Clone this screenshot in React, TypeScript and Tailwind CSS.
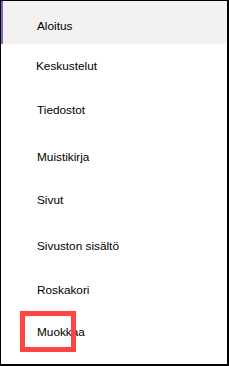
const items = [
  { label: "Aloitus", cls: "h-[43px] pt-[17px] bg-[#f3f2f1] border-l-2 border-[#8764b8] pl-[34px]" },
  { label: "Keskustelut", cls: "h-[44px] pt-[14px] pl-[35px]" },
  { label: "Tiedostot", cls: "h-[44px] pt-[14px] pl-[36px]" },
  { label: "Muistikirja", cls: "h-[44px] pt-[17px] pl-[36px]" },
  { label: "Sivut", cls: "h-[44px] pt-[16px] pl-[36px]" },
  { label: "Sivuston sisältö", cls: "h-[44px] pt-[18px] pl-[36px]" },
  { label: "Roskakori", cls: "h-[44px] pt-[18px] pl-[36px]" },
  { label: "Muokkaa", cls: "h-[44px] pt-[16px] pl-[36px]" },
];

export default function App() {
  return (
    <div
      className="relative w-[229px] h-[366px] bg-white border-t border-l border-r-2 border-b-2 border-black text-[11.8px] leading-[16px] text-black"
      style={{ fontFamily: '"Liberation Sans", Arial, sans-serif' }}
    >
      <nav className="flex flex-col">
        {items.map((it) => (
          <div key={it.label} className={it.cls}>
            {it.label}
          </div>
        ))}
      </nav>
      <div className="absolute left-[19px] top-[310px] w-[56px] h-[41px] border-[5px] border-[#fd4546]" />
    </div>
  );
}
